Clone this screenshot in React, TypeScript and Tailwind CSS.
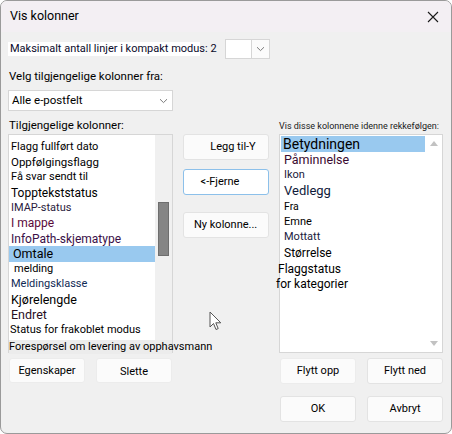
import React from "react";

const font = { fontFamily: 'Roboto, "Liberation Sans", Arial, sans-serif' };

function Chevron() {
  return (
    <svg width="9" height="6" viewBox="0 0 9 6" fill="none">
      <path d="M1 1.2 L4.5 4.6 L8 1.2" stroke="#7a7a7a" strokeWidth="1" />
    </svg>
  );
}

function Btn({ label, className = "" }: { label: string; className?: string }) {
  return (
    <div
      className={`flex items-center justify-center whitespace-nowrap rounded-[3px] border border-[#e3e3e3] bg-[#fbfbfb] text-[11px] text-black ${className}`}
    >
      {label}
    </div>
  );
}

type Item = { t: string; c?: string; size?: string; sel?: boolean; pl?: string };

const leftItems: Item[] = [
  { t: "Flagg fullført dato" },
  { t: "Oppfølgingsflagg", size: "text-[11.5px]" },
  { t: "Få svar sendt til" },
  { t: "Topptekststatus", size: "text-[12px]" },
  { t: "IMAP-status", c: "text-[#2a1b3d]" },
  { t: "I mappe", c: "text-[#5a0a3a]", size: "text-[12px]" },
  { t: "InfoPath-skjematype", c: "text-[#3a1048]", size: "text-[12px]" },
  { t: "Omtale", size: "text-[12.5px]", sel: true, pl: "pl-[4px]" },
  { t: "melding", pl: "pl-[5px]" },
  { t: "Meldingsklasse", c: "text-[#102a55]" },
  { t: "Kjørelengde", size: "text-[12.5px]" },
  { t: "Endret", c: "text-[#2a0f1f]", size: "text-[12.5px]" },
  { t: "Status for frakoblet modus", pl: "pl-[1px]" },
];

const rightItems: Item[] = [
  { t: "Betydningen", size: "text-[14px]", sel: true },
  { t: "Påminnelse", c: "text-[#3a0a30]", size: "text-[12.5px]", pl: "pl-[3px]" },
  { t: "Ikon", c: "text-[#1a1a3a]", size: "text-[11px]", pl: "pl-[3px]" },
  { t: "Vedlegg", c: "text-[#101a3a]", size: "text-[13px]", pl: "pl-[3px]" },
  { t: "Fra", size: "text-[10.5px]", pl: "pl-[3px]" },
  { t: "Emne", size: "text-[11px]", pl: "pl-[3px]" },
  { t: "Mottatt", c: "text-[#1a2040]", size: "text-[11px]", pl: "pl-[3px]" },
  { t: "Størrelse", size: "text-[12px]", pl: "pl-[3px]" },
  { t: "Flaggstatus", size: "text-[12px]", pl: "-ml-[3px]" },
  { t: "for kategorier", size: "text-[12px]", pl: "-ml-[5px]" },
];

export default function App() {
  return (
    <div className="w-[452px] h-[434px] bg-white" style={font}>
      <div className="w-[452px] h-[434px] flex flex-col overflow-hidden rounded-[7px] border border-[#9a9a9a] bg-[#f0f0f0] relative">
        {/* title bar */}
        <div className="h-[31px] shrink-0 flex items-center justify-between bg-[#f3eff3] pl-[9px] pr-[12px]">
          <span className="text-[12.5px] text-black">Vis kolonner</span>
          <svg width="12" height="12" viewBox="0 0 12 12">
            <path d="M1 1 L11 11 M11 1 L1 11" stroke="#1a1a1a" strokeWidth="1.1" />
          </svg>
        </div>

        <div className="flex flex-col px-[7px]">
          {/* compact mode row */}
          <div className="mt-[7px] flex items-center h-[20px]">
            <span className="bg-white text-[11px] leading-[14px] whitespace-nowrap text-[#0a0a2a] pl-[2px] pr-[3px] w-[192px]">
              Maksimalt antall linjer i kompakt modus: 2
            </span>
            <div className="ml-[25px] flex h-[20px] w-[45px] border border-[#d6d6d6] bg-white">
              <div className="flex-1" />
              <div className="w-[18px] border-l border-[#d6d6d6] flex items-center justify-center bg-[#fbfbfb]">
                <Chevron />
              </div>
            </div>
          </div>

          <div className="mt-[9px] text-[11.5px] text-black pl-[1px] whitespace-nowrap">Velg tilgjengelige kolonner fra:</div>

          <div className="mt-[5px] flex h-[21px] w-[165px] border border-[#d6d6d6] bg-white">
            <div className="flex-1 flex items-center pl-[3px] text-[11.5px] text-black">Alle e-postfelt</div>
            <div className="w-[17px] flex items-center justify-center">
              <Chevron />
            </div>
          </div>

          {/* three columns */}
          <div className="mt-[6px] grid grid-cols-[165px_86px_164px] gap-x-[10px]">
            <div className="text-[11.5px] text-black pl-[1px] h-[17px] whitespace-nowrap">Tilgjengelige kolonner:</div>
            <div />
            <div className="text-[9px] text-[#1a1a1a] pt-[3px] h-[17px] whitespace-nowrap">
              Vis disse kolonnene idenne rekkefølgen:
            </div>

            {/* left list */}
            <div className="h-[219px] border border-[#d6d6d6] bg-white flex">
              <div className="w-[146px] shrink-0 flex flex-col pt-[4px] relative z-10">
                {leftItems.map((it) => (
                  <div
                    key={it.t}
                    className={`h-[15.3px] flex items-center whitespace-nowrap ${it.size ?? "text-[11px]"} ${
                      it.c ?? "text-black"
                    } ${it.pl ?? "pl-[2px]"} ${it.sel ? "bg-[#99c9ef]" : ""}`}
                  >
                    {it.t}
                  </div>
                ))}
                <div className="mt-[2px] h-[14px] flex items-center whitespace-nowrap bg-[#ececec] text-[11px] text-black w-[163px]">
                  Forespørsel om levering av opphavsmann
                </div>
              </div>
              <div className="flex-1 bg-[#f0f0f0] flex justify-center">
                <div className="mt-[67px] w-[11px] h-[54px] bg-[#858585] border border-[#6e6e6e]" />
              </div>
            </div>

            {/* middle buttons */}
            <div className="flex flex-col">
              <Btn label="Legg til-Y" className="h-[26px] pl-[14px] text-[11.5px]" />
              <div className="mt-[9px] h-[26px] flex items-center justify-center rounded-[3px] border border-[#8cc0ea] bg-white text-[11px] text-black pr-[12px]">
                &lt;-Fjerne
              </div>
              <Btn label="Ny kolonne..." className="mt-[17px] h-[26px] justify-start pl-[10px] text-[11.5px]" />
            </div>

            {/* right list */}
            <div className="h-[219px] border border-[#d6d6d6] bg-white flex">
              <div className="flex-1 flex flex-col pt-[1px] pl-[1px]">
                {rightItems.map((it) => (
                  <div
                    key={it.t}
                    className={`h-[15.5px] flex items-center whitespace-nowrap ${it.size ?? "text-[11px]"} ${
                      it.c ?? "text-black"
                    } ${it.pl ?? "pl-[2px]"} ${it.sel ? "bg-[#99c9ef] h-[16px]" : ""}`}
                  >
                    {it.t}
                  </div>
                ))}
              </div>
              <div className="w-[17px] flex flex-col items-center justify-between py-[6px]">
                <svg width="8" height="5" viewBox="0 0 8 5">
                  <path d="M0 5 L4 0 L8 5 Z" fill="#c2c2c2" />
                </svg>
                <svg width="8" height="5" viewBox="0 0 8 5">
                  <path d="M0 0 L4 5 L8 0 Z" fill="#c2c2c2" />
                </svg>
              </div>
            </div>

            {/* bottom buttons row */}
            <div className="mt-[5px] flex gap-[11px] pl-[1px]">
              <Btn label="Egenskaper" className="h-[25px] w-[76px] bg-[#f6f6f6] border-[#ececec]" />
              <Btn label="Slette" className="h-[25px] w-[76px] bg-[#f6f6f6] border-[#ececec] pt-[3px]" />
            </div>
            <div />
            <div className="mt-[5px] flex gap-[11px] pl-[1px]">
              <Btn label="Flytt opp" className="h-[26px] w-[76px] bg-[#f6f6f6] border-[#ececec] text-[10.5px]" />
              <Btn label="Flytt ned" className="h-[26px] w-[76px]" />
            </div>

            <div />
            <div />
            <div className="mt-[12px] flex gap-[11px] pl-[1px]">
              <Btn label="OK" className="h-[26px] w-[76px]" />
              <Btn label="Avbryt" className="h-[26px] w-[76px]" />
            </div>
          </div>
        </div>

        {/* mouse cursor */}
        <svg className="absolute left-[208px] top-[310px]" width="14" height="21" viewBox="0 0 14 21">
          <path
            d="M1 1 L1 16 L4.5 12.5 L7 18.5 L9.2 17.6 L6.8 11.8 L11.8 11.8 Z"
            fill="#ffffff"
            stroke="#555"
            strokeWidth="1"
            strokeLinejoin="round"
          />
        </svg>
      </div>
    </div>
  );
}
